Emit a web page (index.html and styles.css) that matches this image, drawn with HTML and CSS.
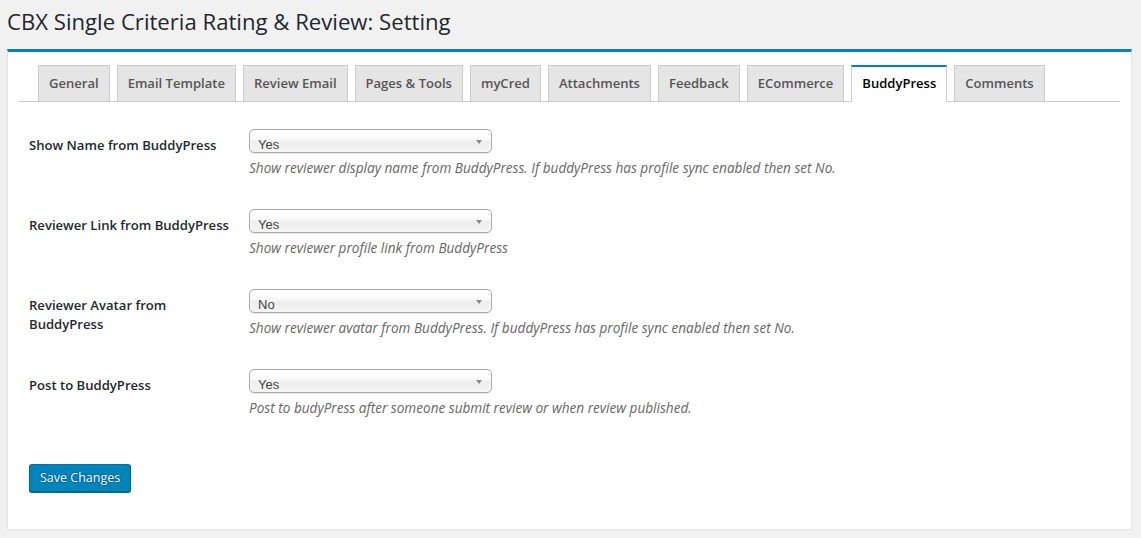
FILE: index.html
```html
<!DOCTYPE html>
<html lang="en">
<head>
<meta charset="utf-8">
<title>CBX Single Criteria Rating &amp; Review: Setting</title>
<link rel="stylesheet" href="styles.css">
</head>
<body>
<div class="wrap">
  <h1 class="title">CBX Single Criteria Rating &amp; Review: Setting</h1>
  <div class="panel">
    <nav class="tabs">
      <a class="tab">General</a>
      <a class="tab">Email Template</a>
      <a class="tab">Review Email</a>
      <a class="tab">Pages &amp; Tools</a>
      <a class="tab">myCred</a>
      <a class="tab">Attachments</a>
      <a class="tab">Feedback</a>
      <a class="tab">ECommerce</a>
      <a class="tab active">BuddyPress</a>
      <a class="tab">Comments</a>
    </nav>
    <form class="settings">
      <table class="form-table">
        <tr>
          <th>Show Name from BuddyPress</th>
          <td>
            <div class="select"><span>Yes</span><i class="arrow"></i></div>
            <p class="desc">Show reviewer display name from BuddyPress. If buddyPress has profile sync enabled then set No.</p>
          </td>
        </tr>
        <tr>
          <th>Reviewer Link from BuddyPress</th>
          <td>
            <div class="select"><span>Yes</span><i class="arrow"></i></div>
            <p class="desc">Show reviewer profile link from BuddyPress</p>
          </td>
        </tr>
        <tr>
          <th>Reviewer Avatar from BuddyPress</th>
          <td>
            <div class="select"><span>No</span><i class="arrow"></i></div>
            <p class="desc">Show reviewer avatar from BuddyPress. If buddyPress has profile sync enabled then set No.</p>
          </td>
        </tr>
        <tr>
          <th>Post to BuddyPress</th>
          <td>
            <div class="select"><span>Yes</span><i class="arrow"></i></div>
            <p class="desc">Post to budyPress after someone submit review or when review published.</p>
          </td>
        </tr>
      </table>
      <p class="submit"><button type="button" class="btn">Save Changes</button></p>
    </form>
  </div>
</div>
</body>
</html>
```
FILE: styles.css
```css
html, body {
  margin: 0;
  padding: 0;
}
body {
  background: #f1f1f1;
  font-family: "Open Sans", "Noto Sans", sans-serif;
  color: #23282d;
}
.wrap {
  padding: 0 9px 0 7px;
}
.title {
  margin: 0;
  padding: 7px 0 13px;
  font-size: 22.15px;
  font-weight: 400;
  line-height: 29px;
  color: #23282d;
}
.panel {
  background: #fff;
  border: 1px solid #e5e5e5;
  border-top: 3px solid #0085ba;
  box-shadow: 0 1px 1px rgba(0,0,0,.04);
  padding: 0 0 27px;
}
.tabs {
  display: flex;
  align-items: flex-end;
  gap: 7px;
  margin: 13px 11px 0;
  padding-left: 19px;
  border-bottom: 1px solid #ccc;
}
.tab {
  display: block;
  margin-bottom: -1px;
  padding: 5px 10px;
  line-height: 25px;
  font-size: 13.05px;
  font-weight: 600;
  color: #555;
  background: #e5e5e5;
  border: 1px solid #ccc;
  white-space: nowrap;
}
.tab.active {
  background: #fff;
  color: #000;
  border-top: 2px solid #0085ba;
  padding-top: 4px;
  border-bottom-color: #fff;
}
.settings {
  padding: 0 21px;
  margin: 0;
}
.form-table {
  border-collapse: collapse;
  margin-top: 12px;
  width: 100%;
}
.form-table th {
  width: 200px;
  padding: 22px 10px 18px 0;
  text-align: left;
  vertical-align: top;
  font-size: 13.1px;
  font-weight: 600;
  line-height: 19px;
  color: #23282d;
}
.form-table td {
  padding: 15px 10px;
  vertical-align: top;
}
.select {
  position: relative;
  box-sizing: border-box;
  width: 243px;
  height: 24px;
  padding: 7px 0 0 8px;
  border: 1px solid #aaa;
  border-radius: 5px;
  background: linear-gradient(to bottom, #fff 20%, #f6f6f6 50%, #eee 52%, #f4f4f4 100%);
  box-shadow: inset 0 0 3px #fff, 0 1px 1px rgba(0,0,0,.1);
  font-family: "Liberation Sans", Arial, sans-serif;
  font-size: 13px;
  line-height: 15px;
  color: #444;
  overflow: hidden;
}
.arrow {
  position: absolute;
  right: 9px;
  top: 10px;
  width: 0;
  height: 0;
  border-left: 3px solid transparent;
  border-right: 3px solid transparent;
  border-top: 4px solid #888;
}
.desc {
  margin: 4px 0 0;
  font-size: 13.6px;
  font-style: italic;
  line-height: 22px;
  color: #666;
}
.submit {
  margin: 20px 0 0;
  padding: 10px 0;
}
.btn {
  box-sizing: border-box;
  height: 28px;
  padding: 0 10px 1px;
  font-family: inherit;
  font-size: 12.5px;
  line-height: 26px;
  color: #fff;
  background: #0085ba;
  border: 1px solid;
  border-color: #0073aa #006799 #006799;
  border-radius: 3px;
  box-shadow: 0 1px 0 #006799;
  text-shadow: 0 -1px 1px #006799, 1px 0 1px #006799, 0 1px 1px #006799, -1px 0 1px #006799;
  cursor: pointer;
}
```
